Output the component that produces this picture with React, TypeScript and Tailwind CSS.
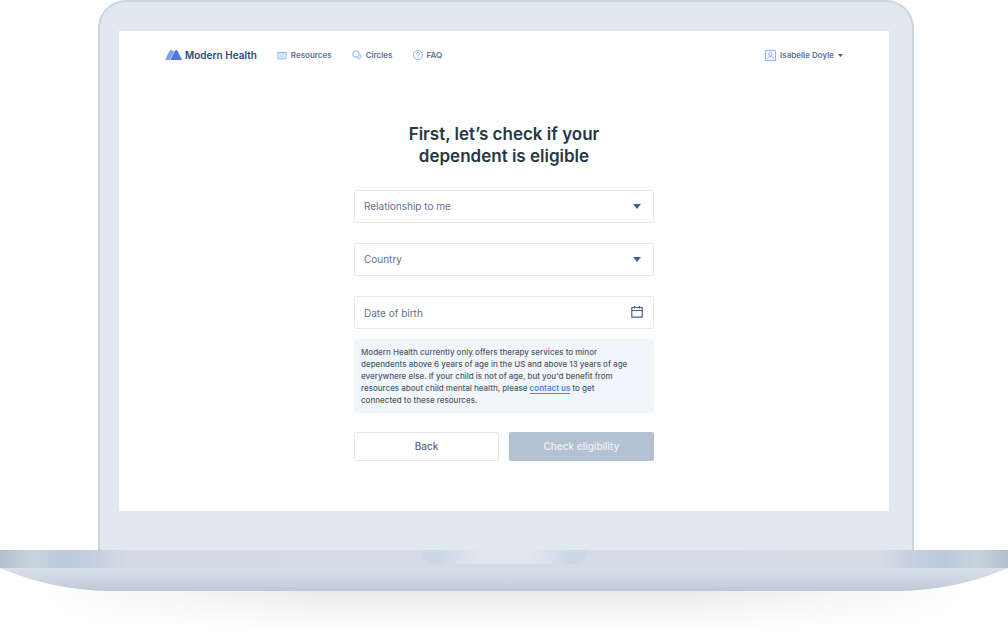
import { ReactNode } from "react";

function LogoMark() {
  return (
    <svg viewBox="0 0 17 10" className="w-[17px] h-[10px]" aria-hidden="true">
      <path d="M0 10 4.2 1.400C4.800.2 6.300-.2 7.500.6L9 1.700 4.800 10z" fill="#7da0e8" />
      <path d="M5.300 10 9.800 1c.7-1.200 2-1.200 2.700 0L17 10z" fill="#4a7ae0" />
    </svg>
  );
}

function ResourcesIcon() {
  return (
    <svg viewBox="0 0 10 9" className="w-[10px] h-[9px]" fill="none" stroke="#72a8ed" strokeWidth=".8" aria-hidden="true">
      <path d="M.9 1.500h8.200v6.400H.9z" />
      <path d="M.5 1.900h9M5 3v4.500" strokeWidth=".6" />
      <path d="M2.400 4h1.400M2.400 5.800h1.400M6.200 4h1.400M6.200 5.800h1.400" strokeWidth=".9" />
    </svg>
  );
}

function CirclesIcon() {
  return (
    <svg viewBox="0 0 10 10" className="w-[10px] h-[10px]" fill="none" stroke="#72a8ed" strokeWidth=".9" aria-hidden="true">
      <circle cx="4" cy="4" r="3.200" />
      <path d="M8.300 4.500a2.300 2.300 0 1 1-3.500 3.200" />
    </svg>
  );
}

function FaqIcon() {
  return (
    <svg viewBox="0 0 10 10" className="w-[10px] h-[10px]" fill="none" stroke="#6b9cec" strokeWidth=".8" aria-hidden="true">
      <circle cx="5" cy="5" r="4.500" />
      <path d="M3.500 3.800a1.500 1.500 0 1 1 2.200 1.400c-.6.3-.7.600-.7 1.100M5 7v.9" />
    </svg>
  );
}

function UserIcon() {
  return (
    <svg viewBox="0 0 11 11" className="w-[11px] h-[11px]" fill="none" stroke="#86abee" strokeWidth=".9" aria-hidden="true">
      <path d="M.5.5h10v10H.5z" />
      <circle cx="5.500" cy="4.100" r="1.800" />
      <path d="M2.500 9c.2-1.600 1.100-2.500 3-2.500s2.800.9 3 2.500" />
    </svg>
  );
}

function CalendarIcon() {
  return (
    <svg viewBox="0 0 12 12" className="w-3 h-3" fill="none" stroke="#4a6283" aria-hidden="true">
      <path d="M.8 1.500h10.400v9.700H.8zM.8 4.500h10.400M3.500 0v2.500M8.500 0v2.500" strokeWidth="1.200" />
    </svg>
  );
}

function NavLink({ icon, children }: { icon: ReactNode; children: ReactNode }) {
  return (
    <a href="#" className="flex items-center gap-1">
      {icon}
      {children}
    </a>
  );
}

const fieldClass =
  "block w-full h-[33px] appearance-none rounded-xs border border-[#e4eaf4] bg-white px-[9px] text-[10px] text-[#61738f] placeholder:text-[#61738f] placeholder:opacity-100";

function SelectField({ label, options }: { label: string; options: string[] }) {
  return (
    <div className="relative">
      <select aria-label={label} defaultValue="" className={fieldClass}>
        <option value="" disabled>
          {label}
        </option>
        {options.map((option) => (
          <option key={option}>{option}</option>
        ))}
      </select>
      <svg viewBox="0 0 8 5" className="absolute right-[13px] top-[14px] w-2 h-[5px] pointer-events-none" aria-hidden="true">
        <path d="M0 0h8L4 5z" fill="#4a6283" />
      </svg>
    </div>
  );
}

function Header() {
  return (
    <header className="flex items-center justify-between px-[46px] h-12 text-[8px] font-semibold text-[#61738c]">
      <nav className="flex items-center gap-5">
        <a href="#" className="flex items-center gap-[3px] text-[10px] font-semibold text-[#274b77]">
          <LogoMark />
          Modern Health
        </a>
        <NavLink icon={<ResourcesIcon />}>Resources</NavLink>
        <NavLink icon={<CirclesIcon />}>Circles</NavLink>
        <NavLink icon={<FaqIcon />}>FAQ</NavLink>
      </nav>
      <button type="button" className="flex items-center gap-1">
        <UserIcon />
        Isabelle Doyle
        <svg viewBox="0 0 5 3" className="w-[5px] h-[3px]" aria-hidden="true">
          <path d="M0 0h5L2.500 3z" fill="#4a6283" />
        </svg>
      </button>
    </header>
  );
}

function EligibilityForm() {
  return (
    <form className="mx-auto w-[300px] pt-11 pb-[50px]">
      <h1 className="text-center text-[17px] leading-[22px] font-semibold text-[#263746]">
        First, let’s check if your
        <br />
        dependent is eligible
      </h1>
      <div className="mt-[23px] flex flex-col gap-5">
        <SelectField label="Relationship to me" options={["Child", "Spouse", "Other"]} />
        <SelectField label="Country" options={["United States", "Canada", "United Kingdom"]} />
        <div className="relative">
          <input type="text" aria-label="Date of birth" placeholder="Date of birth" className={fieldClass} />
          <button type="button" aria-label="Open calendar" className="absolute right-[11px] top-[10px]">
            <CalendarIcon />
          </button>
        </div>
      </div>
      <p className="mt-[10px] rounded-xs bg-[#f2f5f9] px-[7px] py-[7px] text-[8px] leading-3 font-medium text-[#4d5c6b]">
        Modern Health currently only offers therapy services to minor
        <br />
        dependents above 6 years of age in the US and above 13 years of age
        <br />
        everywhere else. If your child is not of age, but you'd benefit from
        <br />
        resources about child mental health, please{" "}
        <a href="#" className="font-semibold text-[#3c8ae6] underline underline-offset-2">
          contact us
        </a>{" "}
        to get
        <br />
        connected to these resources.
      </p>
      <div className="mt-[19px] grid grid-cols-2 gap-[10px] text-[10px] font-medium">
        <button type="button" className="h-[29px] rounded-xs border border-[#e2e8f2] bg-white text-[#5b6e8a]">
          Back
        </button>
        <button type="submit" className="h-[29px] rounded-xs bg-[#b4c1d3] text-[#edf1f6]">
          Check eligibility
        </button>
      </div>
    </form>
  );
}

function LaptopBase() {
  return (
    <div>
      <div className="flex justify-center h-[18px] bg-[linear-gradient(90deg,#b1bfce_0%,#c8d3dc_3%,#bccadf_6.500%,#c3cfde_9%,#d5dbe6_13%,#d5dce6_87%,#c3cfde_91%,#bccadf_93.500%,#c8d3dc_97%,#b1bfce_100%)]">
        <div className="w-[167px] h-[14px] rounded-b-[14px] bg-[linear-gradient(90deg,#cdd8e7_0%,#cdd8e7_12%,#dae1ed_25%,#e0e7ef_36%,#e0e7ef_66%,#dae1ed_75%,#cdd8e7_88%,#cdd8e7_100%)]" />
      </div>
      <svg viewBox="0 0 1008 23" preserveAspectRatio="none" className="block w-full h-[23px]" aria-hidden="true">
        <defs>
          <linearGradient id="underside" x1="0" y1="0" x2="0" y2="1">
            <stop offset="0" stopColor="#d9dfeb" />
            <stop offset=".4" stopColor="#d0d7e5" />
            <stop offset="1" stopColor="#bfcad7" />
          </linearGradient>
        </defs>
        <path d="M0 0Q54 23 112 23H896Q954 23 1008 0z" fill="url(#underside)" />
      </svg>
      <div className="mx-[3%] h-10 bg-linear-to-b from-[#ebebeb] to-white mask-x-from-70% mask-x-to-100%" />
    </div>
  );
}

export default function App() {
  return (
    <div className="min-h-screen bg-white font-['Inter',sans-serif]">
      <div className="ml-[98px] mr-[94px] rounded-t-[28px] border-2 border-b-0 border-[#cbd5e0] bg-[#e1e8ef] pl-[19px] pr-[23px] pt-[29px] pb-[39px]">
        <main className="bg-white">
          <Header />
          <EligibilityForm />
        </main>
      </div>
      <LaptopBase />
    </div>
  );
}
